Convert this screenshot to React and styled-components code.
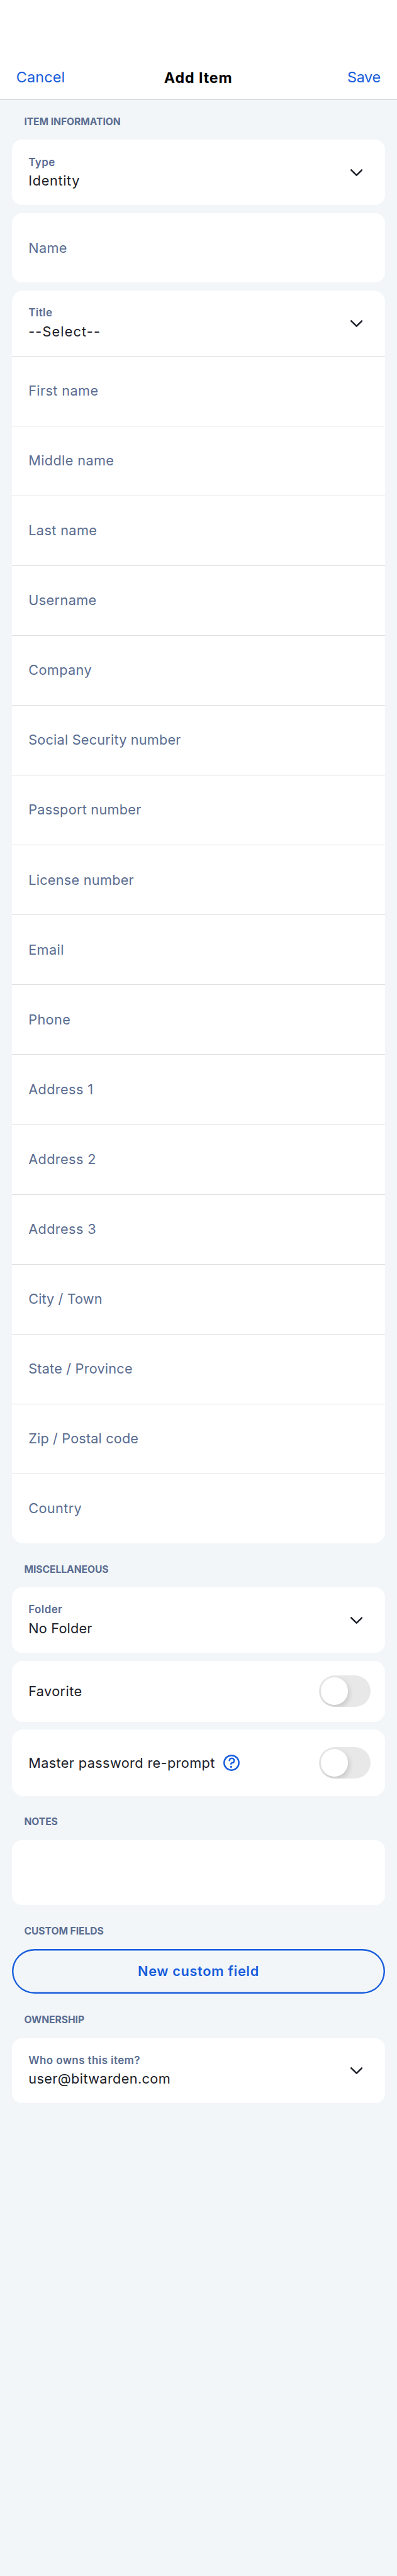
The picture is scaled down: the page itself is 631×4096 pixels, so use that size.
import React from "react";
import styled, { createGlobalStyle } from "styled-components";

const color = {
  page: "#f2f6f9",
  surface: "#ffffff",
  primary: "#175ddc",
  muted: "#5a6d91",
  text: "#1b2029",
  line: "#dfdfe1",
};

const GlobalStyle = createGlobalStyle`
  * { box-sizing: border-box; }
  html, body { margin: 0; background: ${color.page}; }
  body {
    font-family: Inter, "Liberation Sans", sans-serif;
    font-size: 21.7px;
    color: ${color.text};
    -webkit-font-smoothing: antialiased;
  }
`;

const Screen = styled.div`
  width: 100%;
  min-height: 4096px;
  background: ${color.page};
`;

const NavBar = styled.header`
  display: grid;
  grid-template-columns: 1fr auto 1fr;
  align-items: end;
  height: 159px;
  padding: 0 26.3px 17.2px 25.8px;
  background: ${color.surface};
  border-bottom: 1px solid #cdcfd2;
`;

const NavAction = styled.button`
  justify-self: ${(p) => (p.$end ? "end" : "start")};
  padding: 0 0 0.6px;
  border: 0;
  background: none;
  font: inherit;
  font-size: 23.4px;
  line-height: 34px;
  letter-spacing: ${(p) => (p.$end ? "-0.35px" : "0.15px")};
  color: ${color.primary};
`;

const NavTitle = styled.h1`
  margin: 0;
  font-size: 23.2px;
  font-weight: 700;
  line-height: 34px;
  letter-spacing: 0.9px;
  color: #000;
`;

const Form = styled.main`
  padding: 0 19.4px;
`;

const SectionTitle = styled.h2`
  display: flex;
  align-items: flex-end;
  height: ${(p) => (p.$first ? 63.2 : 70.1)}px;
  margin: 0;
  padding: 0 19px 18.3px;
  font-size: 15.65px;
  font-weight: 700;
  line-height: 20px;
  letter-spacing: -0.05px;
  text-transform: uppercase;
  color: ${color.muted};
`;

const Stack = styled.div`
  display: flex;
  flex-direction: column;
  gap: 12.9px;
`;

const Card = styled.div`
  overflow: hidden;
  border-radius: ${(p) => (p.$large ? 18 : 16)}px;
  background: ${color.surface};
`;

const SelectRow = styled.div`
  display: flex;
  align-items: center;
  justify-content: space-between;
  height: 103.6px;
  padding: 0 35.6px 0 25.8px;
`;

const SelectText = styled.div`
  display: flex;
  flex-direction: column;
  gap: 4.4px;
  padding-top: 1.5px;
`;

const Label = styled.span`
  font-size: 17px;
  font-weight: 600;
  line-height: 20px;
  letter-spacing: 0.4px;
  color: ${color.muted};
`;

const Value = styled.span`
  line-height: 30px;
  letter-spacing: ${(p) => p.$track ?? 0.38}px;
`;

const FieldRow = styled.div`
  display: flex;
  align-items: center;
  height: ${(p) => (p.$alone ? 110.5 : 111.09)}px;
  padding: 0 25.8px ${(p) => (p.$alone ? 0 : 1.4)}px;
  border-top: ${(p) => (p.$alone ? "0" : `1px solid ${color.line}`)};
  letter-spacing: ${(p) => p.$track ?? 0.38}px;
  color: ${color.muted};
`;

const ToggleRow = styled.div`
  display: flex;
  align-items: center;
  height: ${(p) => p.$height}px;
  padding: 0 22.6px 0 25.8px;
  letter-spacing: 0.38px;
`;

const HelpButton = styled.button`
  display: flex;
  margin-left: 13.8px;
  padding: 0;
  border: 0;
  background: none;
`;

const Track = styled.span`
  display: flex;
  align-items: center;
  width: 82.5px;
  height: 50.2px;
  margin-left: auto;
  padding: 0 3.2px;
  border-radius: 25.1px;
  overflow: hidden;
  background: #e8e8e8;
`;

const Knob = styled.span`
  width: 43.7px;
  height: 43.7px;
  border-radius: 50%;
  background: #fff;
  box-shadow: 2px 4px 9px rgba(0, 0, 0, 0.15);
`;

const NotesArea = styled.div`
  height: 103.5px;
`;

const OutlineButton = styled.button`
  display: block;
  width: 100%;
  height: 71.1px;
  padding: 0 0 1px;
  border: 0;
  border-radius: 36px;
  background: none;
  box-shadow: inset 0 0 0 2.4px ${color.primary};
  font: inherit;
  font-weight: 600;
  letter-spacing: 0.65px;
  color: ${color.primary};
`;

const ChevronSvg = styled.svg`
  flex: none;
  width: 19.4px;
  height: 11.1px;
  margin-top: 1.4px;
`;

const Chevron = () => (
  <ChevronSvg viewBox="0 0 36 20.6" fill="none">
    <path
      d="M2.3 2.4 18 17.9 33.7 2.4"
      stroke={color.text}
      strokeWidth="4.6"
      strokeLinecap="round"
      strokeLinejoin="round"
    />
  </ChevronSvg>
);

const HelpIcon = () => (
  <svg width="25.9" height="25.9" viewBox="0 0 48 48" fill="none">
    <circle cx="24" cy="24" r="21.7" stroke={color.primary} strokeWidth="4.6" />
    <path
      d="M17.7 17.2C18.4 13.3 21.1 11 24.8 11c4 0 6.9 2.8 6.9 6.5 0 3.8-2.7 6.5-6.2 6.8-2.2.2-2.9.9-2.9 3.4"
      stroke={color.primary}
      strokeWidth="4.3"
      strokeLinecap="round"
      strokeLinejoin="round"
    />
    <circle cx="22.8" cy="36" r="3.1" fill={color.primary} />
  </svg>
);

const Select = ({ label, value, track }) => (
  <SelectRow>
    <SelectText>
      <Label>{label}</Label>
      <Value $track={track}>{value}</Value>
    </SelectText>
    <Chevron />
  </SelectRow>
);

const Toggle = () => (
  <Track role="switch" aria-checked="false">
    <Knob />
  </Track>
);

const identityFields = [
  { name: "First name" },
  { name: "Middle name" },
  { name: "Last name" },
  { name: "Username" },
  { name: "Company" },
  { name: "Social Security number", track: 0.2 },
  { name: "Passport number", track: 0.25 },
  { name: "License number", track: 0.25 },
  { name: "Email" },
  { name: "Phone" },
  { name: "Address 1" },
  { name: "Address 2" },
  { name: "Address 3" },
  { name: "City / Town", track: 0.1 },
  { name: "State / Province", track: 0.2 },
  { name: "Zip / Postal code", track: 0.15 },
  { name: "Country" },
];

export default function App() {
  return (
    <Screen>
      <GlobalStyle />
      <NavBar>
        <NavAction>Cancel</NavAction>
        <NavTitle>Add Item</NavTitle>
        <NavAction $end>Save</NavAction>
      </NavBar>
      <Form>
        <SectionTitle $first>Item information</SectionTitle>
        <Stack>
          <Card>
            <Select label="Type" value="Identity" track={0.67} />
          </Card>
          <Card>
            <FieldRow $alone>Name</FieldRow>
          </Card>
          <Card $large>
            <Select label="Title" value="--Select--" track={1.15} />
            {identityFields.map(({ name, track }) => (
              <FieldRow key={name} $track={track}>
                {name}
              </FieldRow>
            ))}
          </Card>
        </Stack>

        <SectionTitle>Miscellaneous</SectionTitle>
        <Stack>
          <Card>
            <Select label="Folder" value="No Folder" track={0.2} />
          </Card>
          <Card $large>
            <ToggleRow $height={97}>
              Favorite
              <Toggle />
            </ToggleRow>
          </Card>
          <Card $large>
            <ToggleRow $height={105.2}>
              Master password re-prompt
              <HelpButton aria-label="Help">
                <HelpIcon />
              </HelpButton>
              <Toggle />
            </ToggleRow>
          </Card>
        </Stack>

        <SectionTitle>Notes</SectionTitle>
        <Card>
          <NotesArea />
        </Card>

        <SectionTitle>Custom fields</SectionTitle>
        <OutlineButton>New custom field</OutlineButton>

        <SectionTitle>Ownership</SectionTitle>
        <Card>
          <Select label="Who owns this item?" value="user@bitwarden.com" />
        </Card>
      </Form>
    </Screen>
  );
}
